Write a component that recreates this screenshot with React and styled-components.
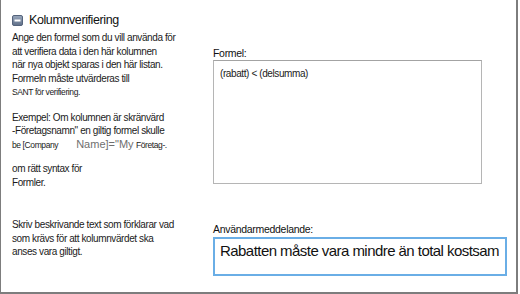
import React from "react";
import styled, { createGlobalStyle } from "styled-components";

const GlobalStyle = createGlobalStyle`
  body {
    margin: 0;
    background: #ffffff;
    font-family: "Liberation Sans", Arial, sans-serif;
    color: #1b1b1b;
  }
`;

const Frame = styled.div`
  box-sizing: border-box;
  width: 518px;
  height: 294px;
  border-left: 1px solid #7d7d7d;
  border-right: 2px solid #7d7d7d;
  border-bottom: 2px solid #7d7d7d;
  display: grid;
  grid-template-columns: 199px 1fr;
`;

const LeftColumn = styled.div`
  padding: 11px 0 0 11px;
  display: flex;
  flex-direction: column;
`;

const Header = styled.div`
  display: flex;
  align-items: center;
  gap: 6px;
  font-size: 12.5px;
  line-height: 18px;
  letter-spacing: -0.4px;
  color: #111;
`;

const Help = styled.p`
  margin: ${(p) => p.$top}px 0 0;
  font-size: 10px;
  line-height: 13.5px;
  letter-spacing: -0.4px;
  white-space: nowrap;
`;

const Small = styled.span`
  font-size: 8.5px;
`;

const Faded = styled.span`
  margin-left: 18px;
  font-size: 11px;
  letter-spacing: 0;
  color: #6f6f6f;
`;

const RightColumn = styled.div`
  display: flex;
  flex-direction: column;
  padding: 46px 0 0 13px;
`;

const Label = styled.label`
  font-size: 10.5px;
  line-height: 14px;
  letter-spacing: -0.3px;
  color: #111;
  margin-top: ${(p) => p.$top || 0}px;
`;

const FormulaBox = styled.div`
  box-sizing: border-box;
  width: 269px;
  height: 124px;
  border: 1px solid #b5b5b5;
  border-top-color: #a3a3a3;
  padding: 7px 6px;
  font-size: 10px;
  letter-spacing: -0.4px;
`;

const MessageBox = styled.div`
  box-sizing: border-box;
  width: 294px;
  height: 39px;
  margin-top: 1px;
  border: 2px solid #6aaee6;
  padding: 2px 5px;
  font-size: 15px;
  line-height: 20px;
  letter-spacing: -0.55px;
  white-space: nowrap;
  overflow: hidden;
  color: #111;
`;

function CollapseIcon() {
  return (
    <svg width="11" height="11" viewBox="0 0 11 11">
      <defs>
        <linearGradient id="g" x1="0" y1="0" x2="0" y2="1">
          <stop offset="0" stopColor="#9aa8bd" />
          <stop offset="1" stopColor="#5f6f88" />
        </linearGradient>
      </defs>
      <rect x="0.5" y="0.5" width="10" height="10" rx="1.5" fill="url(#g)" stroke="#55647c" />
      <rect x="2.5" y="4.5" width="6" height="2" fill="#ffffff" />
    </svg>
  );
}

export default function App() {
  return (
    <>
      <GlobalStyle />
      <Frame>
        <LeftColumn>
          <Header>
            <CollapseIcon />
            Kolumnverifiering
          </Header>
          <Help $top={2}>
            Ange den formel som du vill använda för
            <br />
            att verifiera data i den här kolumnen
            <br />
            när nya objekt sparas i den här listan.
            <br />
            Formeln måste utvärderas till
            <br />
            <Small>SANT för verifiering.</Small>
          </Help>
          <Help $top={11}>
            Exempel: Om kolumnen är skränvärd
            <br />
            -Företagsnamn" en giltig formel skulle
            <br />
            <Small>be [Company</Small>
            <Faded>Name]="My</Faded> <Small>Företag-.</Small>
          </Help>
          <Help $top={10}>
            om rätt syntax för
            <br />
            Formler.
          </Help>
          <Help $top={29}>
            Skriv beskrivande text som förklarar vad
            <br />
            som krävs för att kolumnvärdet ska
            <br />
            anses vara giltigt.
          </Help>
        </LeftColumn>
        <RightColumn>
          <Label>Formel:</Label>
          <FormulaBox>(rabatt) &lt; (delsumma)</FormulaBox>
          <Label $top={38}>Användarmeddelande:</Label>
          <MessageBox>Rabatten måste vara mindre än total kostsam</MessageBox>
        </RightColumn>
      </Frame>
    </>
  );
}
